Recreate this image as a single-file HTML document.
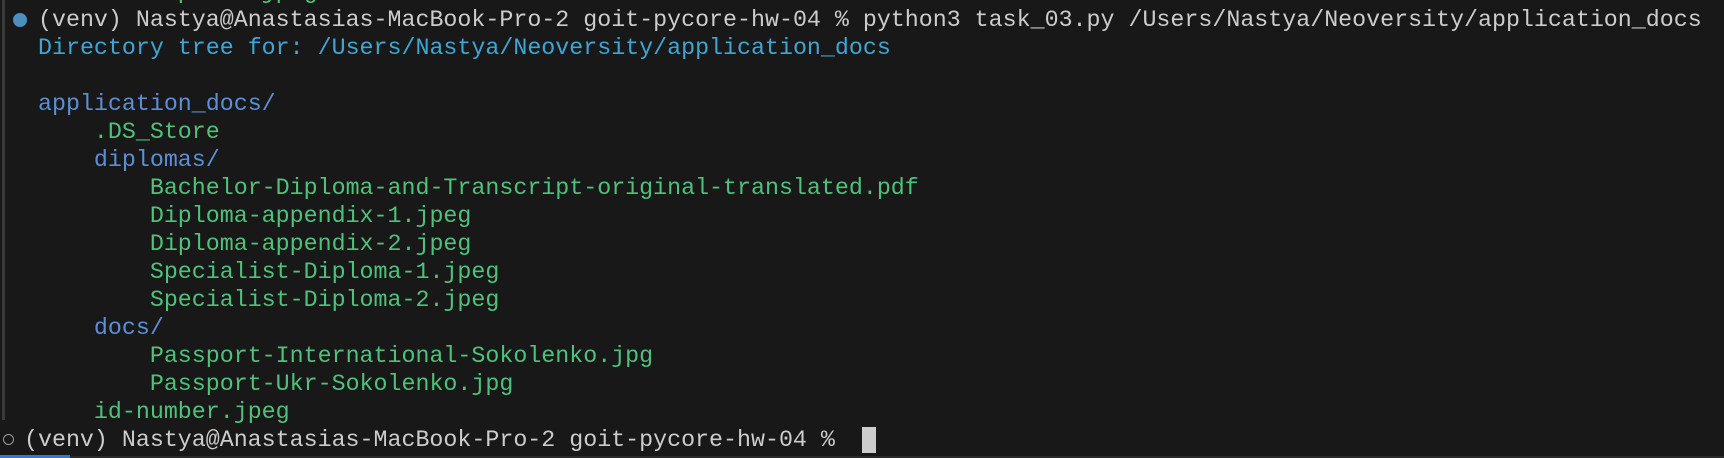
<!DOCTYPE html>
<html><head><meta charset="utf-8"><style>
html,body{margin:0;padding:0;background:#181818;width:1724px;height:458px;overflow:hidden;position:relative}
.l{position:absolute;left:38px;white-space:pre;font-family:"Liberation Mono",monospace;font-size:23.3px;line-height:28px;color:#cccccc}
.c{color:#3fa6d4}.b{color:#5b8fd6}.g{color:#4ec27a}
</style></head><body>
<div style="position:absolute;left:2px;top:0;width:3px;height:420px;background:#3a3a3a"></div>
<div class="l g" style="top:-22px">        Diploma-jpeg</div>
<div style="position:absolute;left:13px;top:13px;width:14px;height:14px;border-radius:50%;background:#4a8fc0"></div>
<div class="l" style="top:6px">(venv) Nastya@Anastasias-MacBook-Pro-2 goit-pycore-hw-04 % python3 task_03.py /Users/Nastya/Neoversity/application_docs</div>
<div class="l c" style="top:34px">Directory tree for: /Users/Nastya/Neoversity/application_docs</div>
<div class="l b" style="top:90px">application_docs/</div>
<div class="l g" style="top:118px">    .DS_Store</div>
<div class="l b" style="top:146px">    diplomas/</div>
<div class="l g" style="top:174px">        Bachelor-Diploma-and-Transcript-original-translated.pdf</div>
<div class="l g" style="top:202px">        Diploma-appendix-1.jpeg</div>
<div class="l g" style="top:230px">        Diploma-appendix-2.jpeg</div>
<div class="l g" style="top:258px">        Specialist-Diploma-1.jpeg</div>
<div class="l g" style="top:286px">        Specialist-Diploma-2.jpeg</div>
<div class="l b" style="top:314px">    docs/</div>
<div class="l g" style="top:342px">        Passport-International-Sokolenko.jpg</div>
<div class="l g" style="top:370px">        Passport-Ukr-Sokolenko.jpg</div>
<div class="l g" style="top:398px">    id-number.jpeg</div>
<div style="position:absolute;left:3px;top:434px;width:9px;height:9px;border-radius:50%;border:1.5px solid #9a9a9a"></div>
<div class="l" style="top:426px;left:24px">(venv) Nastya@Anastasias-MacBook-Pro-2 goit-pycore-hw-04 % </div>
<div style="position:absolute;left:862px;top:427px;width:14px;height:26px;background:#cccccc"></div>
<div style="position:absolute;left:0;top:455px;width:70px;height:3px;background:#2f7bd4"></div>
<div style="position:absolute;left:70px;top:456px;width:1654px;height:2px;background:#2a2a2a"></div>
</body></html>
